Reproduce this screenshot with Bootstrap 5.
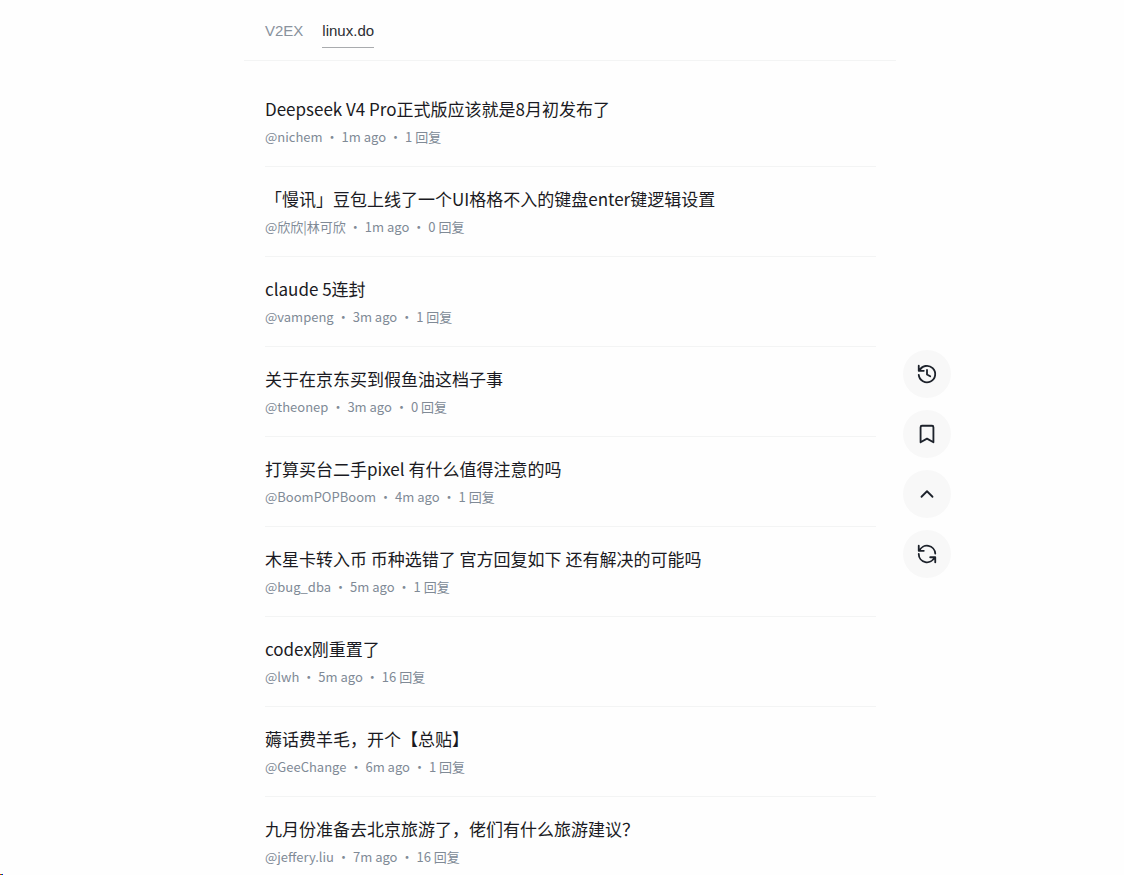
<!DOCTYPE html>
<html lang="zh-CN">
<head>
<meta charset="utf-8">
<meta name="viewport" content="width=device-width, initial-scale=1">
<title>linux.do</title>
<link href="https://cdn.jsdelivr.net/npm/bootstrap@5.3.0/dist/css/bootstrap.min.css" rel="stylesheet">
<script src="https://cdn.jsdelivr.net/npm/bootstrap@5.3.0/dist/js/bootstrap.bundle.min.js" defer></script>
<style>
  body { background: #fefefe; color: #1a1a22; font-family: "Noto Sans CJK SC", sans-serif; }
  .feed-shell { max-width: 652px; }
  .feed-tabs { padding: 12px 21px; gap: 19px; border-bottom: 1px solid #f3f4f4; font: 15px/24px "Liberation Sans", sans-serif; }
  .feed-tabs .nav-link { padding: 7px 0 4px; color: #89929d; border-bottom: 1px solid transparent; }
  .feed-tabs .nav-link.active { color: #2b2d33; border-bottom-color: #a9abae; }
  .feed-list { padding: 16px 20px 0 21px; }
  .feed-item { padding: 20px 0; border-bottom: 1px solid #f3f4f4; }
  .feed-title { font-size: 17px; line-height: 24px; font-weight: 400; }
  .feed-title a { color: #1a1a22; }
  .feed-meta { font-size: 13px; line-height: 19px; margin-top: 6px; color: #808a96; gap: 3px; }
  .tool-rail { position: fixed; top: 350px; left: calc(50% + 341px); gap: 12px; }
  .tool-btn { width: 48px; height: 48px; padding: 0; border: 0; background: #f8f8f8; color: #1d222b; }
  .tool-btn svg { width: 22px; height: 22px; fill: none; stroke: currentColor; stroke-width: 2; stroke-linecap: round; stroke-linejoin: round; }
  .pixel-strip { left: 0; bottom: 0; width: 3px; height: 1px; background: linear-gradient(90deg, #f00 0 1px, #0a0 1px 2px, #00f 2px 3px); }
</style>
</head>
<body>
<div class="ps-3">
  <div class="feed-shell mx-auto">
    <nav class="nav feed-tabs" aria-label="来源">
      <a class="nav-link" href="#v2ex">V2EX</a>
      <a class="nav-link active" aria-current="page" href="#linuxdo">linux.do</a>
    </nav>
    <main class="feed-list">
      <article class="feed-item"><h2 class="feed-title m-0"><a class="text-decoration-none" href="#1">Deepseek V4 Pro正式版应该就是8月初发布了</a></h2><div class="feed-meta d-flex"><span>@nichem</span><span>•</span><span>1m ago</span><span>•</span><span>1 回复</span></div></article>
      <article class="feed-item"><h2 class="feed-title m-0"><a class="text-decoration-none" href="#2">「慢讯」豆包上线了一个UI格格不入的键盘enter键逻辑设置</a></h2><div class="feed-meta d-flex"><span>@欣欣|林可欣</span><span>•</span><span>1m ago</span><span>•</span><span>0 回复</span></div></article>
      <article class="feed-item"><h2 class="feed-title m-0"><a class="text-decoration-none" href="#3">claude 5连封</a></h2><div class="feed-meta d-flex"><span>@vampeng</span><span>•</span><span>3m ago</span><span>•</span><span>1 回复</span></div></article>
      <article class="feed-item"><h2 class="feed-title m-0"><a class="text-decoration-none" href="#4">关于在京东买到假鱼油这档子事</a></h2><div class="feed-meta d-flex"><span>@theonep</span><span>•</span><span>3m ago</span><span>•</span><span>0 回复</span></div></article>
      <article class="feed-item"><h2 class="feed-title m-0"><a class="text-decoration-none" href="#5">打算买台二手pixel 有什么值得注意的吗</a></h2><div class="feed-meta d-flex"><span>@BoomPOPBoom</span><span>•</span><span>4m ago</span><span>•</span><span>1 回复</span></div></article>
      <article class="feed-item"><h2 class="feed-title m-0"><a class="text-decoration-none" href="#6">木星卡转入币 币种选错了 官方回复如下 还有解决的可能吗</a></h2><div class="feed-meta d-flex"><span>@bug_dba</span><span>•</span><span>5m ago</span><span>•</span><span>1 回复</span></div></article>
      <article class="feed-item"><h2 class="feed-title m-0"><a class="text-decoration-none" href="#7">codex刚重置了</a></h2><div class="feed-meta d-flex"><span>@lwh</span><span>•</span><span>5m ago</span><span>•</span><span>16 回复</span></div></article>
      <article class="feed-item"><h2 class="feed-title m-0"><a class="text-decoration-none" href="#8">薅话费羊毛，开个【总贴】</a></h2><div class="feed-meta d-flex"><span>@GeeChange</span><span>•</span><span>6m ago</span><span>•</span><span>1 回复</span></div></article>
      <article class="feed-item"><h2 class="feed-title m-0"><a class="text-decoration-none" href="#9">九月份准备去北京旅游了，佬们有什么旅游建议？</a></h2><div class="feed-meta d-flex"><span>@jeffery.liu</span><span>•</span><span>7m ago</span><span>•</span><span>16 回复</span></div></article>
    </main>
  </div>
</div>
<aside class="tool-rail d-flex flex-column">
  <button type="button" class="btn tool-btn rounded-circle d-flex align-items-center justify-content-center" aria-label="历史"><svg viewBox="0 0 24 24"><path d="M12 7.500v5l3.500 2M3 3v5.500h5.500M3.700 8.500A9 9 0 1 1 3 13"/></svg></button>
  <button type="button" class="btn tool-btn rounded-circle d-flex align-items-center justify-content-center" aria-label="收藏"><svg viewBox="0 0 24 24"><path d="M5 4.500A1.500 1.500 0 0 1 6.500 3h11A1.500 1.500 0 0 1 19 4.500V21l-7-4-7 4z"/></svg></button>
  <button type="button" class="btn tool-btn rounded-circle d-flex align-items-center justify-content-center" aria-label="回到顶部"><svg viewBox="0 0 24 24"><path d="m6 15 6-6 6 6"/></svg></button>
  <button type="button" class="btn tool-btn rounded-circle d-flex align-items-center justify-content-center" aria-label="刷新"><svg viewBox="0 0 24 24"><path d="M3 3v5.500h5.500M3.700 8.500A9 9 0 0 1 21 11.500M21 21v-5.500h-5.500M20.300 15.500A9 9 0 0 1 3 12"/></svg></button>
</aside>
<div class="pixel-strip position-fixed" aria-hidden="true"></div>
</body>
</html>
